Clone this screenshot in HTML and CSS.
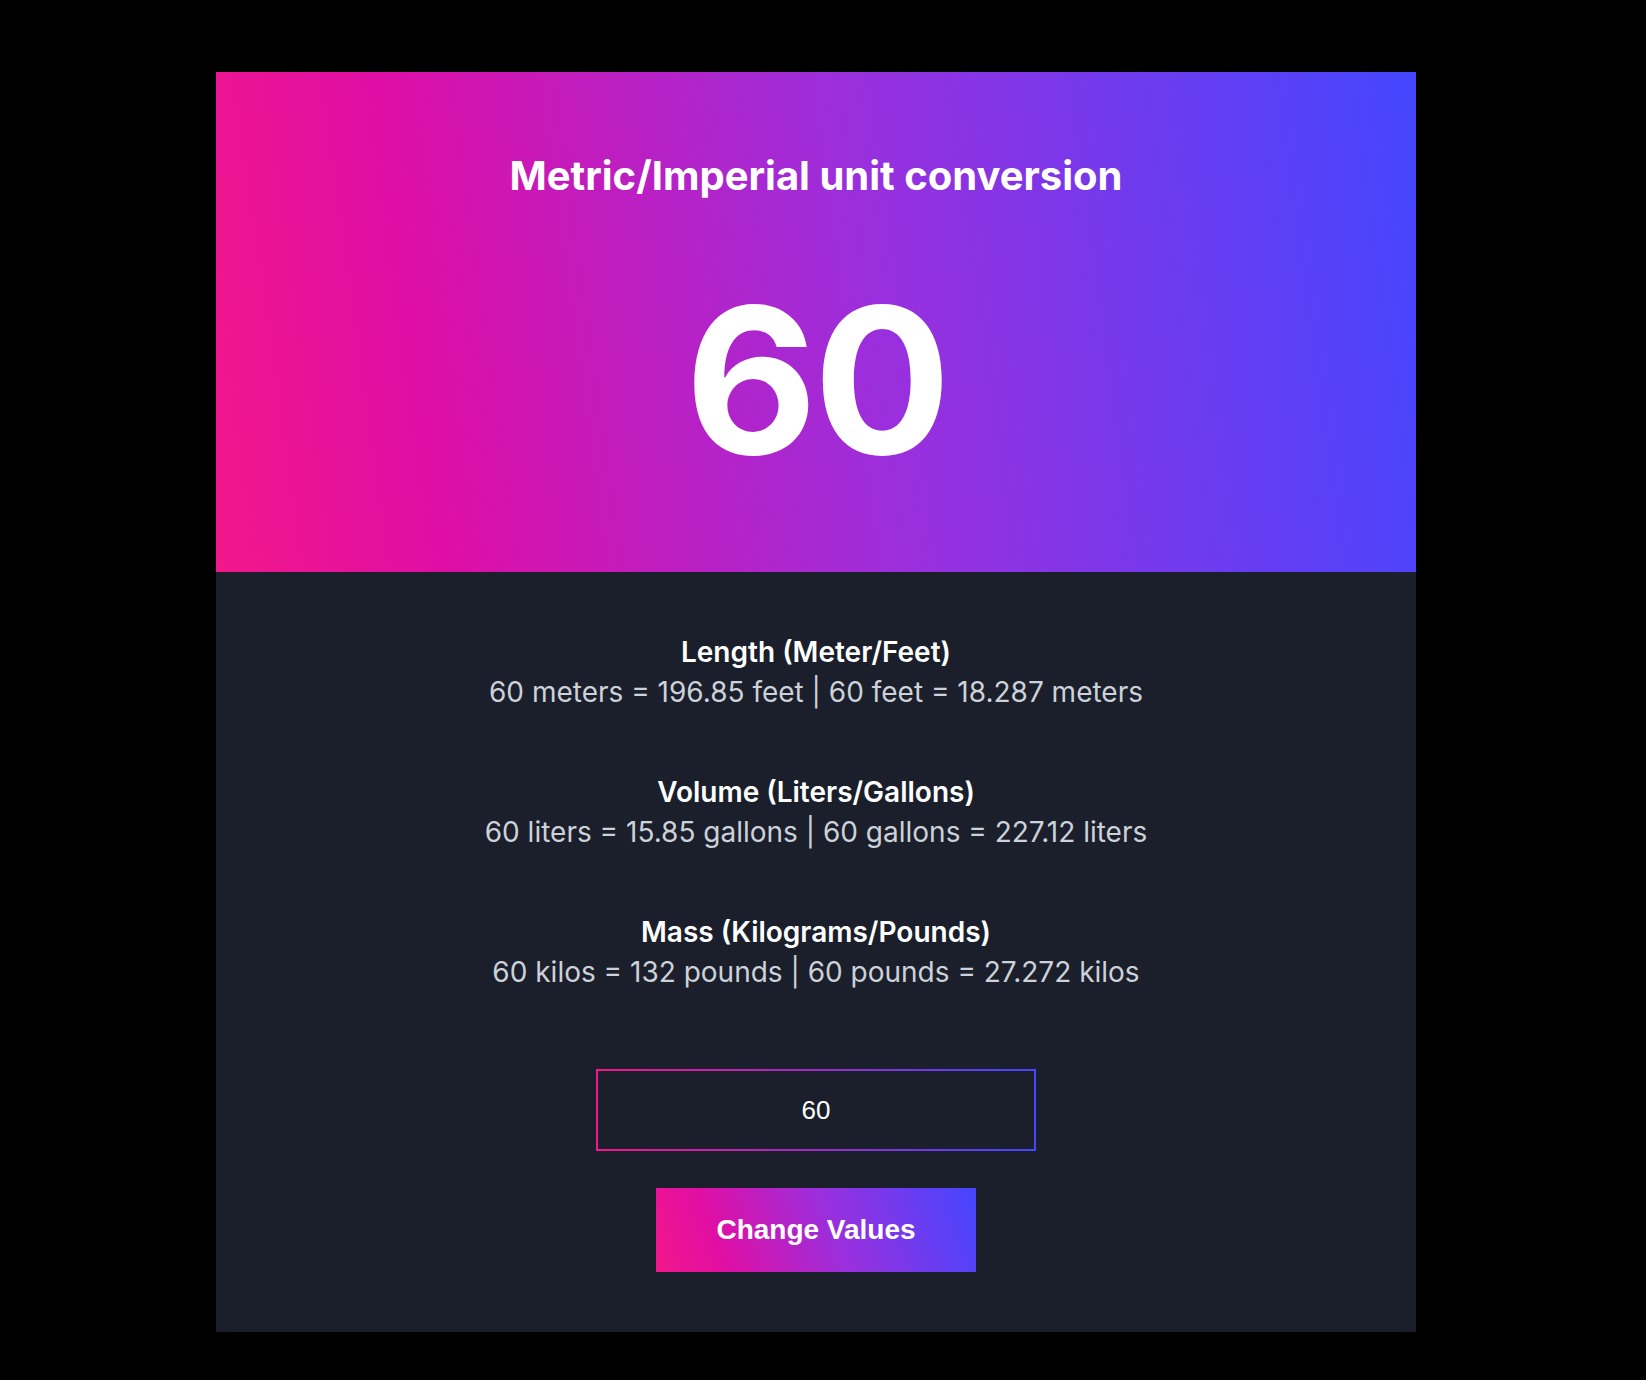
FILE: index.html
```html
<!DOCTYPE html>
<html lang="en">
<head>
<meta charset="utf-8">
<title>Metric/Imperial unit conversion</title>
<link rel="stylesheet" href="styles.css">
</head>
<body>
<main class="page">
  <section class="card">
    <header class="hero">
      <h1 class="hero-title">Metric/Imperial unit conversion</h1>
      <div class="hero-value">60</div>
    </header>
    <div class="panel">
      <div class="results">
        <div class="result">
          <h2 class="result-title">Length (Meter/Feet)</h2>
          <p class="result-text">60 meters = 196.85 feet | 60 feet = 18.287 meters</p>
        </div>
        <div class="result">
          <h2 class="result-title">Volume (Liters/Gallons)</h2>
          <p class="result-text">60 liters = 15.85 gallons | 60 gallons = 227.12 liters</p>
        </div>
        <div class="result">
          <h2 class="result-title">Mass (Kilograms/Pounds)</h2>
          <p class="result-text">60 kilos = 132 pounds | 60 pounds = 27.272 kilos</p>
        </div>
      </div>
      <div class="form">
        <input class="value-input" type="text" value="60">
        <button class="btn" type="button">Change Values</button>
      </div>
    </div>
  </section>
</main>
</body>
</html>
```
FILE: styles.css
```css
html, body {
  margin: 0;
  padding: 0;
  background: #000;
}

body {
  font-family: Inter, "Noto Sans", "Liberation Sans", sans-serif;
}

.page {
  padding: 72px 0 49px 216px;
  display: flex;
}

.card {
  width: 1200px;
  display: flex;
  flex-direction: column;
}

.hero {
  height: 500px;
  box-sizing: border-box;
  padding-top: 80px;
  display: flex;
  flex-direction: column;
  align-items: center;
  background: linear-gradient(82deg, #f2178a 0%, #df0ea5 18%, #9a2fdd 55%, #4446ff 100%);
  color: #fff;
}

.hero-title {
  margin: 0;
  font-size: 40px;
  line-height: 48px;
  font-weight: 700;
}

.hero-value {
  margin-top: 80px;
  font-size: 204px;
  line-height: 200px;
  font-weight: 700;
  letter-spacing: -4px;
}

.panel {
  background: #1a1f2b;
  padding: 60px 0 60px;
  display: flex;
  flex-direction: column;
  align-items: center;
}

.results {
  display: flex;
  flex-direction: column;
  align-items: center;
  gap: 60px;
}

.result {
  text-align: center;
}

.result-title {
  margin: 0;
  font-size: 28px;
  line-height: 40px;
  font-weight: 600;
  color: #fff;
}

.result-text {
  margin: 0;
  font-size: 28px;
  line-height: 40px;
  font-weight: 400;
  color: #cdd1d8;
}

.form {
  margin-top: 77px;
  display: flex;
  flex-direction: column;
  align-items: center;
  gap: 37px;
}

.value-input {
  width: 440px;
  height: 82px;
  box-sizing: border-box;
  border: 2px solid;
  border-image: linear-gradient(to right, #f2178a, #4446ff) 1;
  background: #1a1f2b;
  color: #fff;
  text-align: center;
  font-family: "Liberation Sans", Arial, sans-serif;
  font-size: 26px;
  outline: none;
  padding: 0;
}

.btn {
  width: 320px;
  height: 84px;
  border: 0;
  padding: 0;
  background: linear-gradient(70deg, #f2178a 0%, #e10ea3 20%, #9a2fdd 55%, #4446ff 100%);
  color: #fff;
  font-family: "Liberation Sans", Arial, sans-serif;
  font-size: 28px;
  font-weight: 700;
  cursor: pointer;
}
```
